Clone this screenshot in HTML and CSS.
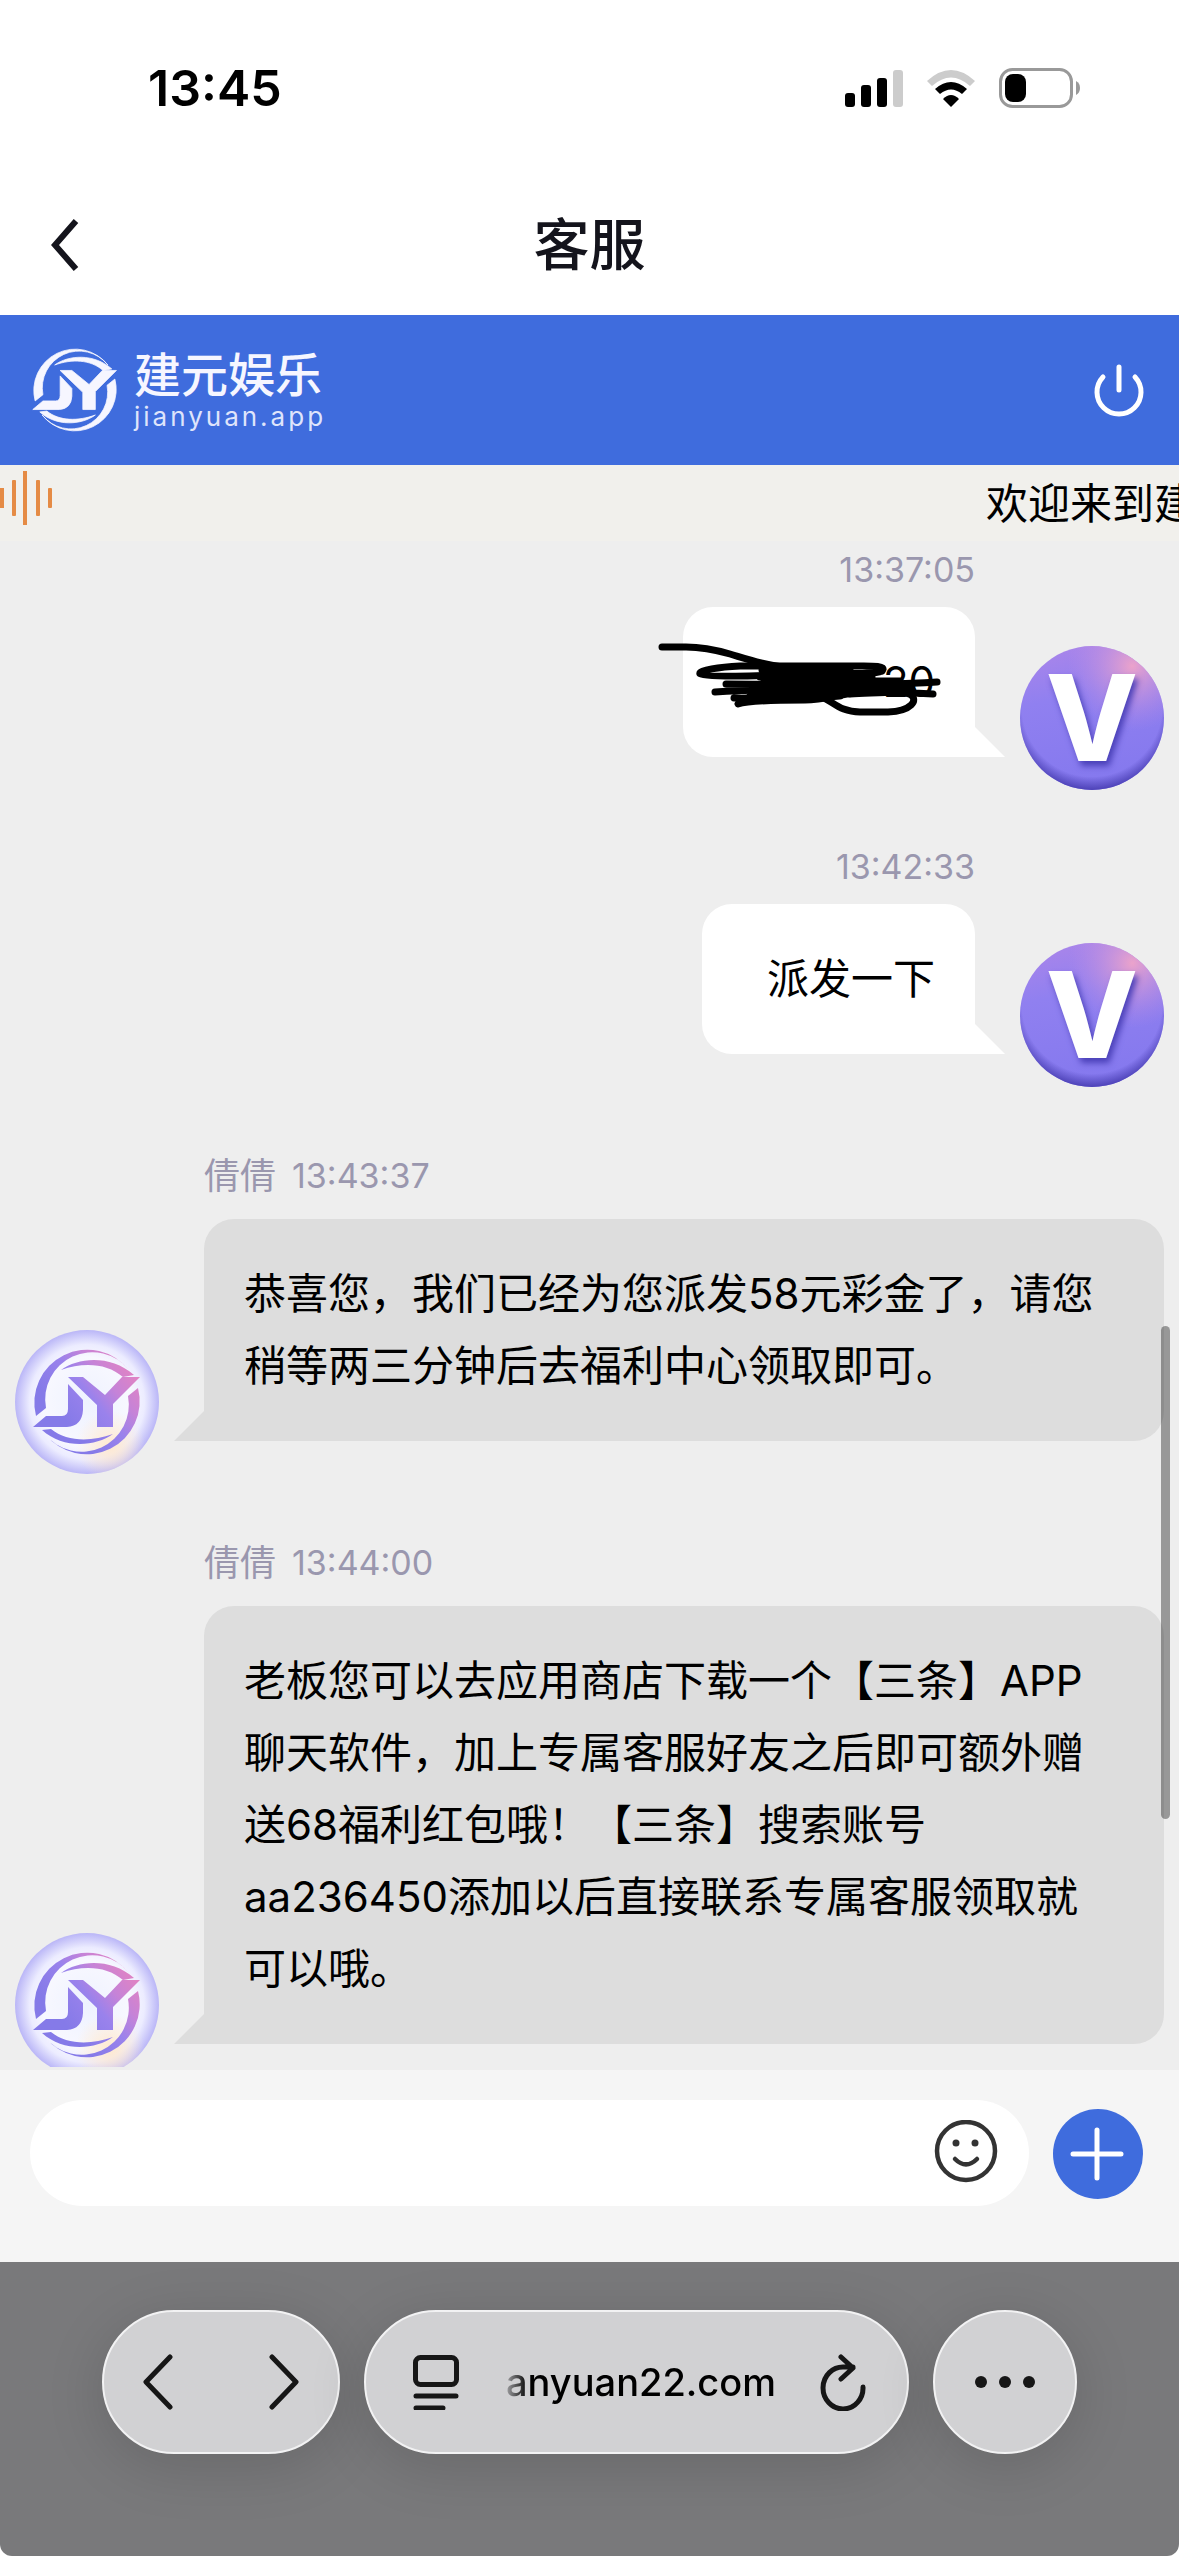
FILE: index.html
```html
<!DOCTYPE html>
<html lang="zh-CN">
<head>
<meta charset="utf-8">
<meta name="viewport" content="width=device-width, initial-scale=1">
<title>客服</title>
<link rel="stylesheet" href="styles.css">
</head>
<body>
<svg class="defs" aria-hidden="true">
  <defs>
    <linearGradient id="markTone" gradientUnits="userSpaceOnUse" x1="118" y1="34" x2="50" y2="90">
      <stop offset="0" stop-color="#e583c0"/>
      <stop offset="0.35" stop-color="#c583d8"/>
      <stop offset="0.6" stop-color="#9a82ec"/>
      <stop offset="1" stop-color="#857ae8"/>
    </linearGradient>
    <radialGradient id="pearl">
      <stop offset="0" stop-color="#eef2ff"/>
      <stop offset="0.62" stop-color="#f8f8ff"/>
      <stop offset="0.8" stop-color="#ececff"/>
      <stop offset="1" stop-color="#bab6f7"/>
    </radialGradient>
    <radialGradient id="pearlWarm" cx="0.66" cy="0.8" r="0.24">
      <stop offset="0" stop-color="#ffe9cf"/>
      <stop offset="1" stop-color="#ffe9cf" stop-opacity="0"/>
    </radialGradient>
    <linearGradient id="vBase" x1="0.3" y1="0" x2="0.5" y2="1">
      <stop offset="0" stop-color="#a985ea"/>
      <stop offset="0.35" stop-color="#9080f0"/>
      <stop offset="1" stop-color="#8478ee"/>
    </linearGradient>
    <radialGradient id="vPink" cx="0.78" cy="0.14" r="0.45">
      <stop offset="0" stop-color="#eba3cb"/>
      <stop offset="1" stop-color="#b98be6" stop-opacity="0"/>
    </radialGradient>
    <radialGradient id="vEdge" cx="0.5" cy="0.42" r="0.58">
      <stop offset="0.84" stop-color="#4a3fb4" stop-opacity="0"/>
      <stop offset="1" stop-color="#4a3fb4" stop-opacity="0.95"/>
    </radialGradient>
    <g id="jyMark">
      <path d="M21 86A53 53 0 0 1 114 40A47 47 0 0 0 31 78Z"/>
      <path d="M46 40C64 27 96 25 119 45L108 47C92 33 68 32 46 40Z"/>
      <path d="M123 58A53 53 0 0 1 30 104A47 47 0 0 0 113 66Z"/>
      <path d="M98 104C80 117 48 119 27 100L36 99C52 112 76 112 98 104Z"/>
      <path d="M53 54L68 70V80Q67 96 52 97H18L31 86H47Q53 86 53 79Z"/>
      <path d="M53 47H68L90 65L107 47H125L98 74V97H82V75Z"/>
    </g>
    <symbol id="agentAvatar" viewBox="0 0 144 144">
      <circle cx="72" cy="72" r="72" fill="url(#pearl)"/>
      <circle cx="72" cy="72" r="72" fill="url(#pearlWarm)"/>
      <use href="#jyMark" fill="url(#markTone)"/>
    </symbol>
    <symbol id="userAvatar" viewBox="0 0 144 144">
      <circle cx="72" cy="72" r="72" fill="url(#vBase)"/>
      <circle cx="72" cy="72" r="72" fill="url(#vPink)"/>
      <circle cx="72" cy="72" r="72" fill="url(#vEdge)"/>
    </symbol>
  </defs>
</svg>

<div class="status">
  <span class="clock">13:45</span>
  <div class="status-icons">
    <svg width="58" height="38" viewBox="0 0 58 38" aria-label="信号">
      <rect x="0" y="24" width="10" height="14" rx="3"/>
      <rect x="16" y="16" width="10" height="22" rx="3"/>
      <rect x="32" y="9" width="10" height="29" rx="3"/>
      <rect x="48" y="1" width="10" height="37" rx="3" fill="#ccc"/>
    </svg>
    <svg width="50" height="38" viewBox="0 0 50 38" aria-label="无线网络">
      <path d="M1 12Q25 -10 49 12L44 17Q25 0 6 17Z" fill="#ccc"/>
      <path d="M9 20Q25 6 41 20L36 25Q25 16 14 25Z"/>
      <path d="M25 38L17 30Q25 22 33 30Z"/>
    </svg>
    <svg width="82" height="40" viewBox="0 0 82 40" aria-label="电量">
      <rect x="1.500" y="1.500" width="71" height="37" rx="12" fill="none" stroke="#999" stroke-width="3"/>
      <rect x="6" y="6" width="21" height="28" rx="8"/>
      <path d="M77 13Q81 15 81 20T77 27Z" fill="#999"/>
    </svg>
  </div>
</div>

<header class="titlebar">
  <button class="back" type="button" aria-label="返回">
    <svg width="28" height="54" viewBox="0 0 28 54"><path d="M25 3L4 27L25 51" fill="none" stroke="#14141c" stroke-width="6"/></svg>
  </button>
  <h1>客服</h1>
</header>

<div class="brand">
  <svg class="brand-mark" width="86" height="88" viewBox="17 17 110 110" fill="#f6f6ff" stroke="#f6f6ff" stroke-width="1" aria-hidden="true"><use href="#jyMark"/></svg>
  <div class="brand-text">
    <strong>建元娱乐</strong>
    <span>jianyuan.app</span>
  </div>
  <button class="power" type="button" aria-label="退出">
    <svg width="54" height="60" viewBox="0 0 54 60" fill="none" stroke="#fff" stroke-width="5" stroke-linecap="round">
      <path d="M11 17A22 22 0 1 0 43 17M27 7V30"/>
    </svg>
  </button>
</div>

<div class="ticker">
  <svg width="54" height="54" viewBox="0 0 54 54" fill="#e58b45" aria-hidden="true">
    <rect x="0" y="17" width="4" height="20"/><rect x="12" y="9" width="4" height="36" rx="1"/><rect x="23" y="0" width="4" height="54"/><rect x="36" y="9" width="4" height="36" rx="1"/><rect x="48" y="17" width="4" height="20" rx="1"/>
  </svg>
  <p>欢迎来到建</p>
</div>

<main class="chat">
  <div class="messages">
    <article class="message outgoing">
      <div class="body">
        <p class="meta"><time>13:37:05</time></p>
        <div class="bubble"><span class="hidden-part"></span>20
          <svg class="scribble" width="290" height="80" viewBox="655 640 290 80" fill="none" stroke="#000" stroke-width="7" stroke-linecap="round" stroke-linejoin="round" aria-hidden="true">
            <path d="M662 647H686C704 647 716 650 730 654S760 665 805 670"/>
            <path d="M882 671C888 665 868 666 855 666H740C720 667 698 670 700 674S760 676 800 674S870 676 882 671"/>
            <path d="M726 684C790 684 850 687 937 682M715 692C780 688 860 690 933 694M734 698C790 700 840 684 912 690M738 704C750 700 780 700 805 700S850 690 880 692"/>
            <path d="M762 670H850M760 677H872M764 681H900M750 696H840M770 690H890"/>
            <path d="M820 696C834 702 840 712 860 712H888C912 711 918 700 911 695S880 693 850 694"/>
          </svg>
        </div>
      </div>
      <div class="avatar user"><svg width="144" height="144"><use href="#userAvatar"/></svg><span>V</span></div>
    </article>

    <article class="message outgoing">
      <div class="body">
        <p class="meta"><time>13:42:33</time></p>
        <div class="bubble">派发一下</div>
      </div>
      <div class="avatar user"><svg width="144" height="144"><use href="#userAvatar"/></svg><span>V</span></div>
    </article>

    <article class="message incoming">
      <div class="avatar"><svg width="144" height="144"><use href="#agentAvatar"/></svg></div>
      <div class="body">
        <p class="meta"><span>倩倩</span><time>13:43:37</time></p>
        <div class="bubble">恭喜您，我们已经为您派发58元彩金了，请您稍等两三分钟后去福利中心领取即可。</div>
      </div>
    </article>

    <article class="message incoming">
      <div class="avatar"><svg width="144" height="144"><use href="#agentAvatar"/></svg></div>
      <div class="body">
        <p class="meta"><span>倩倩</span><time>13:44:00</time></p>
        <div class="bubble">老板您可以去应用商店下载一个【三条】APP聊天软件，加上专属客服好友之后即可额外赠送68福利红包哦！【三条】搜索账号aa236450添加以后直接联系专属客服领取就可以哦。</div>
      </div>
    </article>
  </div>
  <div class="scrollbar"></div>
</main>

<form class="composer">
  <div class="field">
    <input type="text" aria-label="输入消息">
    <button type="button" aria-label="表情">
      <svg width="64" height="66" viewBox="0 0 64 66" fill="none" stroke="#333" stroke-width="4.500" stroke-linecap="round">
        <circle cx="32" cy="31" r="29"/><path d="M21 39Q32 50 43 39"/>
        <g fill="#333" stroke="none"><circle cx="22" cy="23" r="3.500"/><circle cx="41" cy="23" r="3.500"/></g>
      </svg>
    </button>
  </div>
  <button class="add" type="button" aria-label="更多">
    <svg width="90" height="90" viewBox="0 0 90 90" stroke="#fff" stroke-width="5" stroke-linecap="round"><path d="M20 45H68M44 21V69"/></svg>
  </button>
</form>

<footer class="browser">
  <nav class="pill nav">
    <button type="button" aria-label="后退"><svg width="32" height="56" viewBox="0 0 32 56"><path d="M28 3L4 28L28 53"/></svg></button>
    <button type="button" aria-label="前进"><svg width="32" height="56" viewBox="0 0 32 56"><path d="M4 3L28 28L4 53"/></svg></button>
  </nav>
  <div class="pill address">
    <button type="button" aria-label="页面菜单">
      <svg width="46" height="56" viewBox="0 0 46 56"><rect x="2.500" y="3.500" width="41" height="27" rx="5"/><path d="M3 42H43M3 54H30"/></svg>
    </button>
    <span class="url">anyuan22.com</span>
    <button type="button" aria-label="刷新">
      <svg width="48" height="58" viewBox="0 0 48 58"><path d="M34 14H25A20 21 0 1 0 44 34M22 4L34 15L22 26"/></svg>
    </button>
  </div>
  <button class="pill more" type="button" aria-label="更多选项">
    <svg width="60" height="12" viewBox="0 0 60 12"><g fill="#161616" stroke="none"><circle cx="6" cy="6" r="6"/><circle cx="30" cy="6" r="6"/><circle cx="54" cy="6" r="6"/></g></svg>
  </button>
</footer>
</body>
</html>
```

FILE: styles.css
```css
* { box-sizing: border-box; }

body {
  margin: 0;
  height: 100vh;
  display: flex;
  flex-direction: column;
  background: #fff;
  color: #000;
  font-family: Inter, "Noto Sans CJK SC", sans-serif;
  font-size: 42px;
  text-spacing-trim: space-all;
}

h1, p { margin: 0; }
svg { display: block; flex: none; }
button { padding: 0; border: 0; background: none; color: inherit; font: inherit; }
.defs { position: absolute; width: 0; height: 0; }

/* Status bar */
.status {
  flex: none;
  height: 176px;
  padding: 0 98px 0 148px;
  display: flex;
  align-items: center;
  justify-content: space-between;
}
.clock { font-size: 50px; font-weight: 600; line-height: 60px; }
.status-icons { display: flex; align-items: center; gap: 23px; }

/* Page title */
.titlebar {
  flex: none;
  height: 139px;
  padding: 0 51px 2px;
  display: grid;
  grid-template-columns: 1fr auto 1fr;
  align-items: center;
}
.back { justify-self: start; }
.titlebar h1 { font-size: 56px; font-weight: 500; line-height: 84px; color: #14141c; }

/* Brand strip */
.brand {
  flex: none;
  height: 150px;
  padding: 0 33px 0 32px;
  display: flex;
  align-items: center;
  gap: 16px;
  background: #3f6cdd;
  color: #f6f6ff;
}
.brand-text { display: flex; flex-direction: column; }
.brand-text strong { font-size: 47px; font-weight: 500; line-height: 54px; }
.brand-text span { font-size: 26px; line-height: 30px; letter-spacing: 3px; color: #dfe4fb; }
.power { margin-left: auto; }

/* Announcement */
.ticker {
  flex: none;
  height: 76px;
  padding-top: 6px;
  display: flex;
  align-items: flex-start;
  justify-content: space-between;
  background: #f1f0ec;
}
.ticker p { width: 193px; overflow: hidden; white-space: nowrap; line-height: 66px; }

/* Conversation */
.chat {
  position: relative;
  flex: 1;
  min-height: 0;
  padding-bottom: 3px;
  background: #eee;
}
.messages {
  height: 100%;
  padding: 5px 15px 0;
  overflow: hidden;
  display: flex;
  flex-direction: column;
  gap: 53px;
}
.message { flex: none; display: flex; align-items: flex-end; gap: 45px; }
.outgoing { justify-content: flex-end; }
.body { display: flex; flex-direction: column; padding-bottom: 33px; }
.incoming .body { flex: 1; }
.meta {
  display: flex;
  gap: 16px;
  font-size: 36px;
  line-height: 48px;
  color: #9a97ae;
}
.meta time { font-size: 34px; }
.outgoing .meta { justify-content: flex-end; margin-bottom: 13px; }
.incoming .meta { margin: 12px 0 19px; }
.bubble {
  position: relative;
  padding: 39px 40px 39px 65px;
  border-radius: 30px;
  line-height: 72px;
}
.outgoing .bubble { background: #fff; border-bottom-right-radius: 0; }
.incoming .bubble {
  padding: 39px 68px 39px 40px;
  background: #ddd;
  border-bottom-left-radius: 0;
}
.bubble::after {
  content: "";
  position: absolute;
  bottom: 0;
  width: 30px;
  height: 30px;
  background: inherit;
}
.outgoing .bubble::after { left: 100%; clip-path: polygon(0 0, 100% 100%, 0 100%); }
.incoming .bubble::after { right: 100%; clip-path: polygon(100% 0, 100% 100%, 0 100%); }
.hidden-part { display: inline-block; width: 135px; }
.scribble { position: absolute; left: -28px; top: 33px; }
.avatar { flex: none; width: 144px; height: 144px; }
.user { display: grid; place-items: center; }
.user > * { grid-area: 1 / 1; }
.user span {
  z-index: 1;
  font-size: 120px;
  font-weight: 800;
  line-height: 144px;
  color: #fff;
  text-shadow: 3px 5px 6px #4a40b8;
}
.scrollbar {
  position: absolute;
  top: 785px;
  right: 9px;
  width: 9px;
  height: 493px;
  border-radius: 5px;
  background: rgba(0, 0, 0, 0.36);
}

/* Composer */
.composer {
  flex: none;
  height: 192px;
  padding: 30px 36px 0 30px;
  display: flex;
  align-items: flex-start;
  gap: 24px;
  background: #f5f5f5;
}
.field {
  flex: 1;
  height: 106px;
  padding: 0 31px;
  display: flex;
  align-items: center;
  gap: 16px;
  border-radius: 53px;
  background: #fff;
}
.field input {
  flex: 1;
  min-width: 0;
  height: 72px;
  padding: 0 12px;
  border: 0;
  outline: 0;
  background: none;
  font: inherit;
}
.add { margin-top: 9px; border-radius: 50%; background: #3f6cdd; }

/* Browser toolbar */
.browser {
  flex: none;
  height: 294px;
  padding: 48px 102px 0;
  display: grid;
  grid-template-columns: 238px 1fr 144px;
  align-items: start;
  gap: 24px;
  border-radius: 0 0 12px 12px;
  background: #79797b;
}
.pill {
  height: 144px;
  display: flex;
  align-items: center;
  justify-content: space-between;
  border: 2px solid #f2f2f3;
  border-radius: 72px;
  background: #d1d1d3;
  box-shadow: 0 12px 60px rgba(0, 0, 0, 0.14);
}
.pill svg { fill: none; stroke: #161616; stroke-width: 5; stroke-linecap: round; stroke-linejoin: round; }
.nav { padding: 0 38px; }
.address { padding: 0 40px 0 47px; }
.more { justify-content: center; }
.url {
  margin-left: 4px;
  font-size: 38px;
  font-weight: 500;
  line-height: 48px;
  background: linear-gradient(90deg, #a0a0a2, #000 22px);
  background-clip: text;
  color: transparent;
}
```
